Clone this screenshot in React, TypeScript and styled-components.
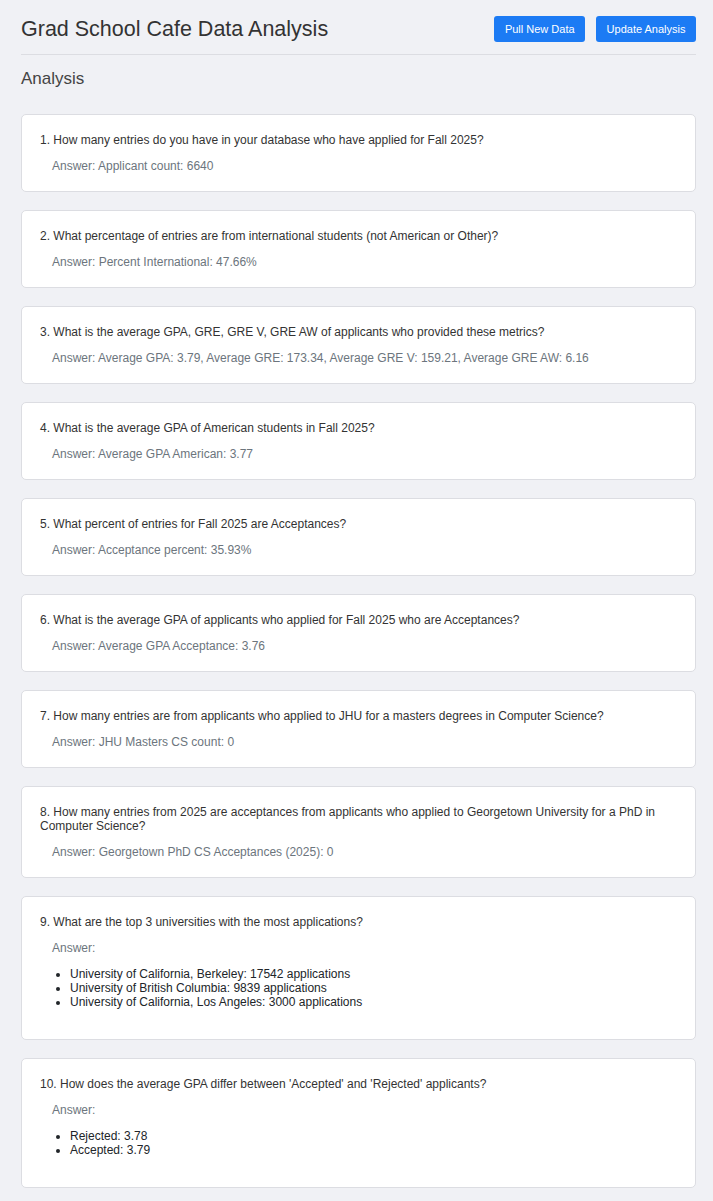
import React from "react";
import styled, { createGlobalStyle } from "styled-components";

const GlobalStyle = createGlobalStyle`
  html, body {
    margin: 0;
    padding: 0;
    background-color: #f0f1f5;
  }
  body {
    font-family: "Liberation Sans", Arial, Helvetica, sans-serif;
    color: #333;
  }
`;

const Page = styled.div`
  padding: 0 17px 14px 21px;
`;

const Header = styled.header`
  display: flex;
  align-items: center;
  justify-content: space-between;
  padding: 16px 0 12px;
  border-bottom: 1px solid #dcdde2;
`;

const Title = styled.h1`
  margin: 0;
  font-size: 21.5px;
  line-height: 26px;
  font-weight: 400;
  color: #333;
`;

const Actions = styled.div`
  display: flex;
  gap: 11px;
`;

const Button = styled.button`
  height: 26px;
  padding: 0 10.5px;
  border: none;
  border-radius: 3px;
  background-color: #1c7bf4;
  color: #fff;
  font-family: "Liberation Sans", Arial, sans-serif;
  font-size: 11px;
  cursor: pointer;
`;

const SectionTitle = styled.h2`
  margin: 13px 0 24px;
  font-size: 17px;
  line-height: 22px;
  font-weight: 400;
  color: #444;
`;

const CardList = styled.div`
  display: flex;
  flex-direction: column;
  gap: 18px;
`;

const Card = styled.div`
  background-color: #fff;
  border: 1px solid #dcdde2;
  border-radius: 5px;
  padding: 18px;
`;

const Question = styled.div`
  font-size: 12px;
  line-height: 14px;
  color: #333;
`;

const Answer = styled.div`
  margin: 12px 0 0 12px;
  font-size: 12px;
  line-height: 14px;
  color: #6c757d;
`;

const ResultList = styled.ul`
  margin: 12px 0;
  padding-left: 30px;
  font-size: 12px;
  line-height: 14px;
  color: #212529;
`;

type Item = {
  question: string;
  answer: string;
  list?: string[];
};

const items: Item[] = [
  {
    question:
      "1. How many entries do you have in your database who have applied for Fall 2025?",
    answer: "Answer: Applicant count: 6640",
  },
  {
    question:
      "2. What percentage of entries are from international students (not American or Other)?",
    answer: "Answer: Percent International: 47.66%",
  },
  {
    question:
      "3. What is the average GPA, GRE, GRE V, GRE AW of applicants who provided these metrics?",
    answer:
      "Answer: Average GPA: 3.79, Average GRE: 173.34, Average GRE V: 159.21, Average GRE AW: 6.16",
  },
  {
    question: "4. What is the average GPA of American students in Fall 2025?",
    answer: "Answer: Average GPA American: 3.77",
  },
  {
    question: "5. What percent of entries for Fall 2025 are Acceptances?",
    answer: "Answer: Acceptance percent: 35.93%",
  },
  {
    question:
      "6. What is the average GPA of applicants who applied for Fall 2025 who are Acceptances?",
    answer: "Answer: Average GPA Acceptance: 3.76",
  },
  {
    question:
      "7. How many entries are from applicants who applied to JHU for a masters degrees in Computer Science?",
    answer: "Answer: JHU Masters CS count: 0",
  },
  {
    question:
      "8. How many entries from 2025 are acceptances from applicants who applied to Georgetown University for a PhD in Computer Science?",
    answer: "Answer: Georgetown PhD CS Acceptances (2025): 0",
  },
  {
    question: "9. What are the top 3 universities with the most applications?",
    answer: "Answer:",
    list: [
      "University of California, Berkeley: 17542 applications",
      "University of British Columbia: 9839 applications",
      "University of California, Los Angeles: 3000 applications",
    ],
  },
  {
    question:
      "10. How does the average GPA differ between 'Accepted' and 'Rejected' applicants?",
    answer: "Answer:",
    list: ["Rejected: 3.78", "Accepted: 3.79"],
  },
];

export default function App() {
  return (
    <>
      <GlobalStyle />
      <Page>
        <Header>
          <Title>Grad School Cafe Data Analysis</Title>
          <Actions>
            <Button>Pull New Data</Button>
            <Button>Update Analysis</Button>
          </Actions>
        </Header>
        <SectionTitle>Analysis</SectionTitle>
        <CardList>
          {items.map((item, index) => (
            <Card key={index}>
              <Question>{item.question}</Question>
              <Answer>{item.answer}</Answer>
              {item.list && (
                <ResultList>
                  {item.list.map((entry) => (
                    <li key={entry}>{entry}</li>
                  ))}
                </ResultList>
              )}
            </Card>
          ))}
        </CardList>
      </Page>
    </>
  );
}
